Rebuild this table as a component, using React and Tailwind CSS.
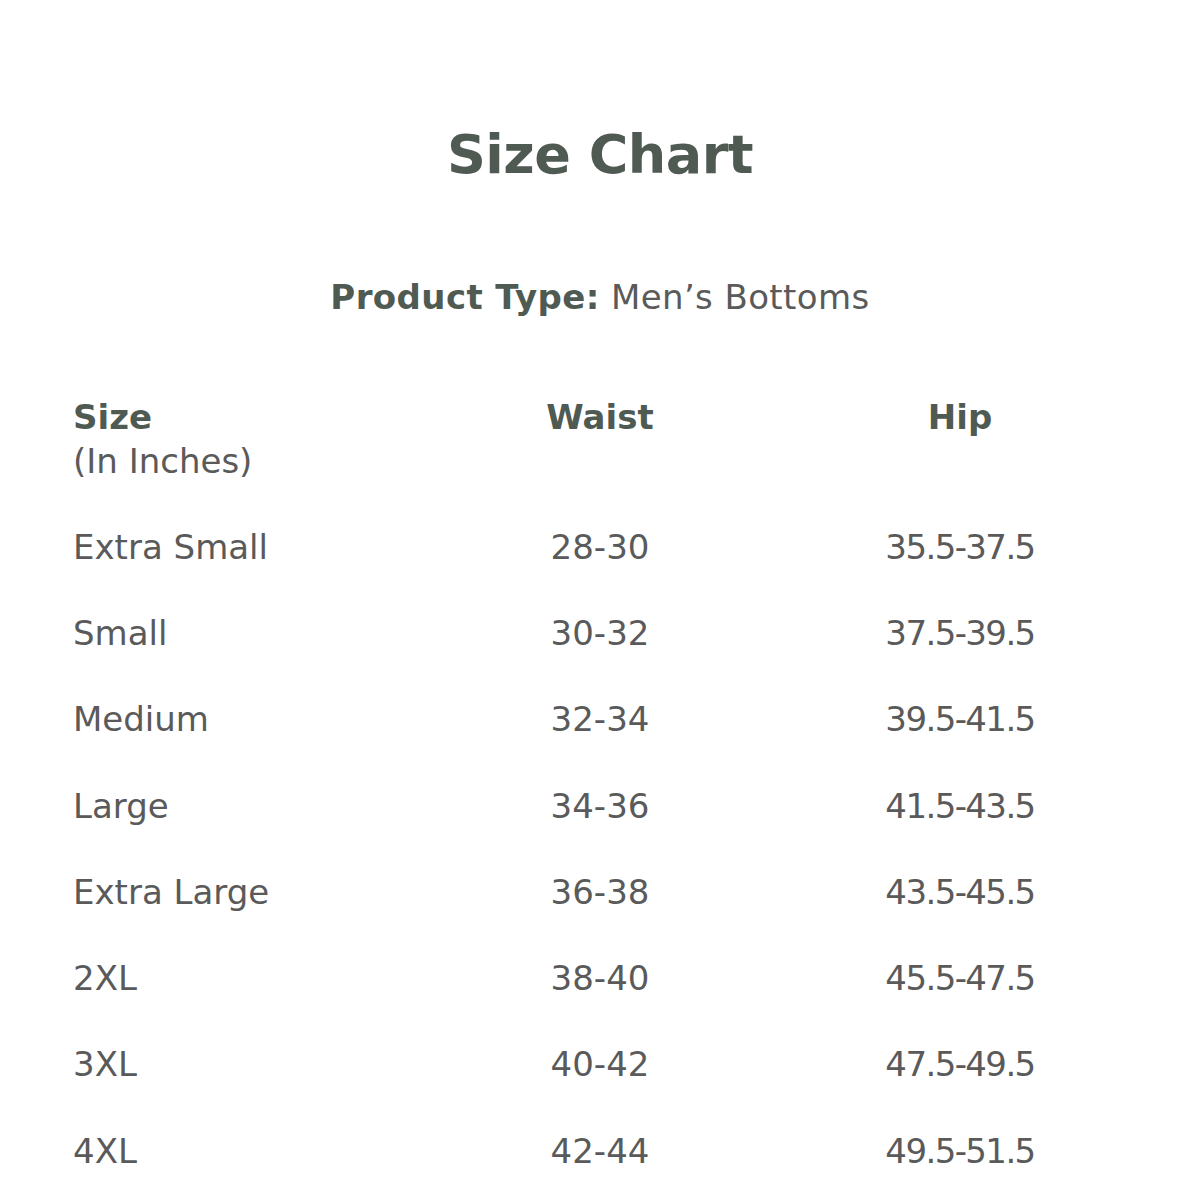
const rows = [
  ['Extra Small', '28-30', '35.5-37.5'],
  ['Small', '30-32', '37.5-39.5'],
  ['Medium', '32-34', '39.5-41.5'],
  ['Large', '34-36', '41.5-43.5'],
  ['Extra Large', '36-38', '43.5-45.5'],
  ['2XL', '38-40', '45.5-47.5'],
  ['3XL', '40-42', '47.5-49.5'],
  ['4XL', '42-44', '49.5-51.5'],
];

const App = () => {
  return (
    <div
      className="w-[1200px] h-[1200px] bg-white overflow-hidden text-[#5a5a5a]"
      style={{ fontFamily: '"DejaVu Sans", "Liberation Sans", sans-serif' }}
    >
      {/* Title */}
      <h1 className="pt-[125px] text-center text-[54px] leading-[60px] font-bold text-[#4f5a53] tracking-[-0.5px]">
        Size Chart
      </h1>

      <p className="mt-[92px] text-center text-[34px] leading-[40px] tracking-[0.4px]">
        <span className="font-bold text-[#4f5a53]">Product Type:</span> Men’s Bottoms
      </p>

      {/* Table */}
      <div className="mt-[78px] pl-[73px]">
        <div className="grid grid-cols-[347px_360px_360px] text-[34px] leading-[44px]">
          <div>
            <div className="font-bold text-[#4f5a53]">Size</div>
            <div>(In Inches)</div>
          </div>
          <div className="text-center font-bold text-[#4f5a53]">Waist</div>
          <div className="text-center font-bold text-[#4f5a53]">Hip</div>
        </div>

        <div className="mt-[21px]">
          {rows.map(([size, waist, hip]) => (
            <div
              key={size}
              className="grid grid-cols-[347px_360px_360px] h-[86.3px] items-center text-[34px]"
            >
              <div>{size}</div>
              <div className="text-center">{waist}</div>
              <div className="text-center tracking-[-1.6px]">{hip}</div>
            </div>
          ))}
        </div>
      </div>
    </div>
  );
};

export default App;
